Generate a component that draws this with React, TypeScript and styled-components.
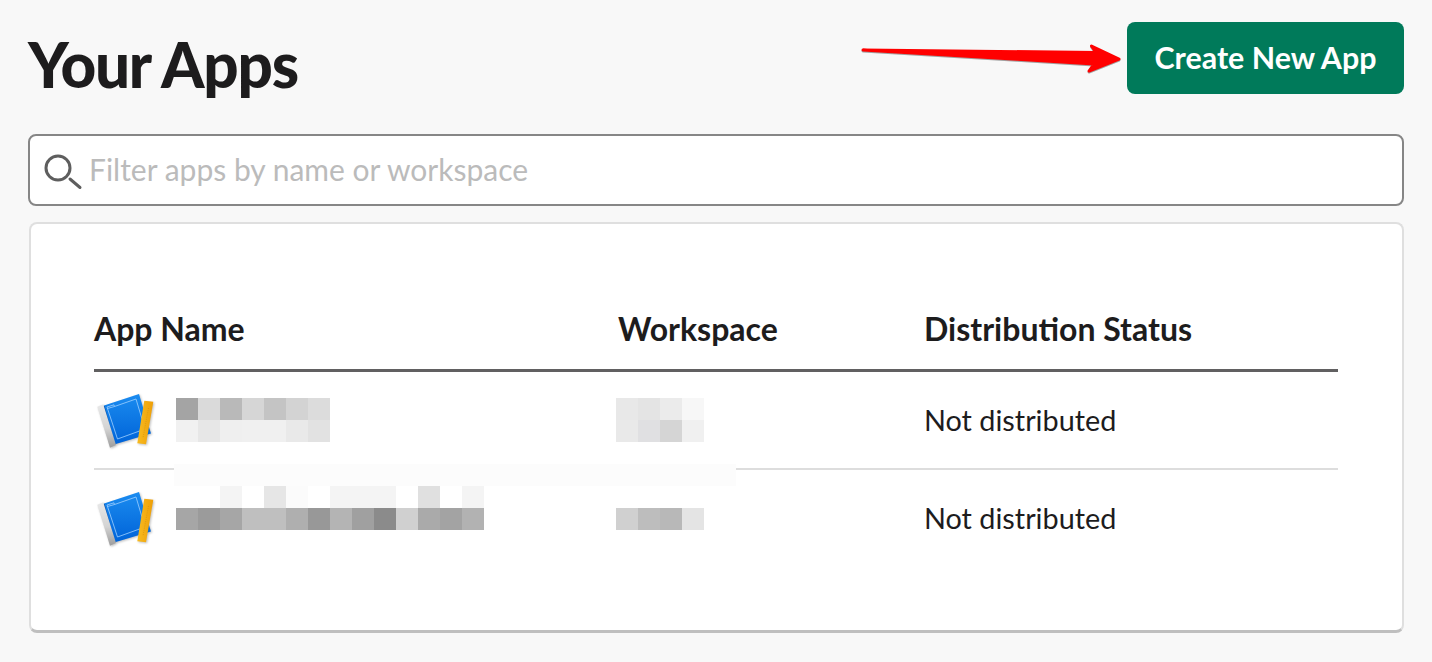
import React from "react";
import styled, { createGlobalStyle } from "styled-components";

const GlobalStyle = createGlobalStyle`
  html, body {
    margin: 0;
    padding: 0;
    background-color: #f8f8f8;
  }
  body {
    font-family: Lato, "Open Sans", sans-serif;
    color: #1d1c1d;
  }
`;

const Page = styled.div`
  width: 1432px;
  height: 662px;
  box-sizing: border-box;
  padding: 22px 28px 0 28px;
  overflow: hidden;
`;

const Header = styled.div`
  position: relative;
  height: 72px;
  display: flex;
  justify-content: space-between;
  align-items: flex-start;
`;

const Title = styled.h1`
  margin: 0;
  padding-top: 6px;
  font-size: 62px;
  line-height: 72px;
  font-weight: 900;
  letter-spacing: -1.25px;
`;

const CreateButton = styled.button`
  width: 277px;
  height: 72px;
  padding: 0 0 2px 0;
  border: none;
  border-radius: 8px;
  background-color: #007a5a;
  color: white;
  font-family: inherit;
  font-size: 30.4px;
  font-weight: 700;
`;

const ArrowSvg = styled.svg`
  position: absolute;
  left: 831px;
  top: 15px;
  filter: drop-shadow(0 1px 0.6px rgba(0, 0, 0, 0.35));
`;

const SearchBox = styled.div`
  margin-top: 40px;
  height: 72px;
  box-sizing: border-box;
  display: flex;
  align-items: center;
  gap: 5px;
  padding-left: 14px;
  background-color: white;
  border: 2px solid #868686;
  border-radius: 8px;
`;

const SearchInput = styled.input`
  flex: 1;
  border: none;
  outline: none;
  padding: 0 0 3px 0;
  background: transparent;
  font-family: inherit;
  font-size: 30px;
  color: #1d1c1d;
  &::placeholder {
    color: #bbbbbb;
    opacity: 1;
  }
`;

const Card = styled.div`
  margin: 16px 0 0 1px;
  height: 411px;
  box-sizing: border-box;
  padding: 87px 64px 0 63px;
  background-color: white;
  border: 2px solid #dfdfdf;
  border-bottom: 3px solid #bfbfbf;
  border-radius: 8px;
`;

const Row = styled.div`
  position: relative;
  display: grid;
  grid-template-columns: 524px 306px 1fr;
`;

const HeadRow = styled(Row)`
  height: 61px;
  box-sizing: border-box;
  border-bottom: 3px solid #616061;
  font-size: 32px;
  line-height: 36px;
  font-weight: 700;
`;

const HeadCell = styled.div``;

const AppRow = styled(Row)<{ $divider?: boolean }>`
  height: ${(props) => (props.$divider ? "98px" : "96px")};
  box-sizing: border-box;
  border-bottom: ${(props) => (props.$divider ? "2px solid #dddddd" : "none")};
`;

const NameCell = styled.div`
  display: flex;
  align-items: center;
  gap: 20px;
  padding-left: 2px;
`;

const WorkspaceCell = styled.div`
  margin-left: -2px;
`;

const StatusCell = styled.div`
  display: flex;
  align-items: center;
  font-size: 28.8px;
`;

const Mosaic = styled.div<{ $cols: number; $top: number }>`
  display: grid;
  grid-template-columns: repeat(${(props) => props.$cols}, 22px);
  grid-auto-rows: 22px;
  align-self: flex-start;
  margin-top: ${(props) => props.$top}px;
`;

const Cell = styled.div<{ $color: string }>`
  background-color: ${(props) => props.$color};
`;

const Band = styled.div`
  position: absolute;
  left: 80px;
  top: -6px;
  width: 562px;
  height: 22px;
  background-color: #fcfcfc;
`;

const BookSvg = styled.svg`
  flex-shrink: 0;
  filter: drop-shadow(1px 1.5px 1.2px rgba(0, 0, 0, 0.25));
`;

const BookIcon = ({ id }: { id: number }) => (
  <BookSvg width="60" height="56" viewBox="0 0 60 56">
    <defs>
      <linearGradient id={`cover${id}`} x1="0" y1="0" x2="0" y2="1">
        <stop offset="0" stopColor="#1b8cf0" />
        <stop offset="1" stopColor="#0063d8" />
      </linearGradient>
      <linearGradient id={`spine${id}`} x1="0" y1="0" x2="0" y2="1">
        <stop offset="0" stopColor="#e8e8e8" />
        <stop offset="0.55" stopColor="#d4d4d4" />
        <stop offset="1" stopColor="#9c9c9c" />
      </linearGradient>
      <linearGradient id={`ruler${id}`} x1="0" y1="0" x2="1" y2="0">
        <stop offset="0" stopColor="#f8bb20" />
        <stop offset="1" stopColor="#ee9f08" />
      </linearGradient>
    </defs>
    <polygon points="7.3,13.7 43,2 55,41.5 19,52.3" fill={`url(#cover${id})`} />
    <polygon points="16,50.5 19,52.3 8.5,14 7,14" fill="#0a4aa0" />
    <polygon points="1.3,14.7 7.3,12.3 20,53 14,55.7" fill={`url(#spine${id})`} />
    <path
      d="M11 15 L18 12.8 L18.5 14.5 L40 7 L49 37 L21.5 47 Z M11.5 16.5 L18.5 14.5"
      fill="none"
      stroke="#9fd0ff"
      strokeWidth="0.8"
    />
    <polygon points="48.3,8.7 57.3,9.7 50,52.3 41.3,51.3" fill={`url(#ruler${id})`} />
    <line x1="52.5" y1="16" x2="47" y2="46" stroke="#d59510" strokeWidth="0.8" strokeDasharray="1 1.2" />
  </BookSvg>
);

const SearchIcon = () => (
  <svg width="40" height="40" viewBox="0 0 40 40" fill="none" stroke="#5e5e5e" strokeWidth="3">
    <circle cx="14" cy="18" r="12" />
    <line x1="26" y1="29" x2="36" y2="37.5" strokeLinecap="round" />
  </svg>
);

const Arrow = () => (
  <ArrowSvg width="270" height="50" viewBox="0 0 270 50">
    <path
      d="M4 13 L237 15.5 L232.5 9 L260 22 L230 34 L235 27 L4 13 Z"
      fill="#ff0000"
      stroke="#ff0000"
      strokeWidth="3"
      strokeLinejoin="round"
    />
  </ArrowSvg>
);

const apps = [
  {
    name: {
      cols: 7,
      top: 26,
      cells: [
        "#a4a4a4", "#dadada", "#b9b9b9", "#d6d6d6", "#c4c4c4", "#d3d3d3", "#dcdcdc",
        "#f1f1f1", "#e7e7e7", "#efefef", "#f0f0f0", "#f0f0f0", "#e9e9e9", "#e2e2e2",
      ],
    },
    workspace: {
      cols: 4,
      top: 26,
      cells: ["#e8e8e8", "#e4e4e4", "#ebebeb", "#f7f7f7", "#e9e9e9", "#e0e0e2", "#d5d5d5", "#f0f0f0"],
    },
  },
  {
    name: {
      cols: 14,
      top: 16,
      cells: [
        "#ffffff", "#ffffff", "#f4f4f4", "#ffffff", "#e6e6e6", "#fbfbfb", "#ffffff",
        "#f4f4f4", "#f4f4f4", "#f4f4f4", "#ffffff", "#e0e0e0", "#ffffff", "#f4f4f4",
        "#a6a6a6", "#9b9b9b", "#a6a6a6", "#bfbfbf", "#bfbfbf", "#afafaf", "#989898",
        "#b4b4b4", "#a0a0a0", "#8b8b8b", "#d0d0d0", "#aaaaaa", "#a3a3a3", "#b2b2b2",
      ],
    },
    workspace: {
      cols: 4,
      top: 38,
      cells: ["#d0d0d0", "#bdbdbd", "#b8b8b8", "#e4e4e4"],
    },
  },
];

const App = () => {
  return (
    <Page>
      <GlobalStyle />
      <Header>
        <Title>Your Apps</Title>
        <CreateButton>Create New App</CreateButton>
        <Arrow />
      </Header>
      <SearchBox>
        <SearchIcon />
        <SearchInput placeholder="Filter apps by name or workspace" />
      </SearchBox>
      <Card>
        <HeadRow>
          <HeadCell>App Name</HeadCell>
          <HeadCell>Workspace</HeadCell>
          <HeadCell>Distribution Status</HeadCell>
        </HeadRow>
        {apps.map((app, i) => (
          <AppRow key={i} $divider={i === 0}>
            {i === 1 && <Band />}
            <NameCell>
              <BookIcon id={i} />
              <Mosaic $cols={app.name.cols} $top={app.name.top}>
                {app.name.cells.map((c, j) => (
                  <Cell key={j} $color={c} />
                ))}
              </Mosaic>
            </NameCell>
            <WorkspaceCell>
              <Mosaic $cols={app.workspace.cols} $top={app.workspace.top}>
                {app.workspace.cells.map((c, j) => (
                  <Cell key={j} $color={c} />
                ))}
              </Mosaic>
            </WorkspaceCell>
            <StatusCell>Not distributed</StatusCell>
          </AppRow>
        ))}
      </Card>
    </Page>
  );
};

export default App;
